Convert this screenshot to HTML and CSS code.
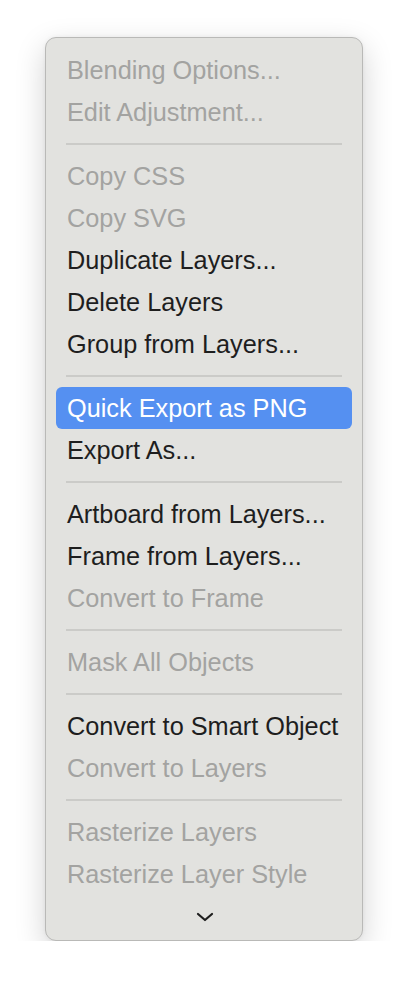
FILE: index.html
```html
<!DOCTYPE html>
<html>
<head>
<meta charset="utf-8">
<link rel="stylesheet" href="styles.css">
</head>
<body>
<div class="menu">
  <div class="item disabled">Blending Options...</div>
  <div class="item disabled">Edit Adjustment...</div>
  <div class="sep"></div>
  <div class="item disabled">Copy CSS</div>
  <div class="item disabled">Copy SVG</div>
  <div class="item">Duplicate Layers...</div>
  <div class="item">Delete Layers</div>
  <div class="item">Group from Layers...</div>
  <div class="sep"></div>
  <div class="item active">Quick Export as PNG</div>
  <div class="item">Export As...</div>
  <div class="sep"></div>
  <div class="item">Artboard from Layers...</div>
  <div class="item">Frame from Layers...</div>
  <div class="item disabled">Convert to Frame</div>
  <div class="sep"></div>
  <div class="item disabled">Mask All Objects</div>
  <div class="sep"></div>
  <div class="item">Convert to Smart Object</div>
  <div class="item disabled">Convert to Layers</div>
  <div class="sep"></div>
  <div class="item disabled">Rasterize Layers</div>
  <div class="item disabled">Rasterize Layer Style</div>
  <div class="more">
    <svg width="18" height="10" viewBox="0 0 18 10"><path d="M2 2 L9 8 L16 2" fill="none" stroke="#1e1e1e" stroke-width="2.2" stroke-linecap="round" stroke-linejoin="round"/></svg>
  </div>
</div>
</body>
</html>
```
FILE: styles.css
```css
html, body {
  margin: 0;
  padding: 0;
  background: #ffffff;
}
body {
  padding: 37px 0 0 45px;
  font-family: "Liberation Sans", Arial, sans-serif;
}
.menu {
  box-sizing: border-box;
  width: 318px;
  height: 904px;
  background: #e2e2df;
  border: 1px solid #b9b9b7;
  border-radius: 11px;
  padding: 11px 10px 0 10px;
  box-shadow: 0 10px 30px rgba(0,0,0,0.18), 0 0 4px rgba(0,0,0,0.05);
  display: flex;
  flex-direction: column;
}
.item {
  height: 42px;
  line-height: 42px;
  padding-left: 11px;
  font-size: 25.3px;
  color: #1e1e1e;
  border-radius: 6px;
  white-space: nowrap;
}
.item.disabled {
  color: #a3a3a1;
}
.item.active {
  background: #5590f1;
  color: #ffffff;
}
.sep {
  height: 22px;
  display: flex;
  align-items: center;
  padding: 0 10px;
}
.sep::before {
  content: "";
  flex: 1;
  height: 2px;
  background: #cbcbc8;
}
.more {
  height: 44px;
  display: flex;
  align-items: center;
  justify-content: center;
}
.more svg {
  display: block;
  margin-left: 2px;
}
```
